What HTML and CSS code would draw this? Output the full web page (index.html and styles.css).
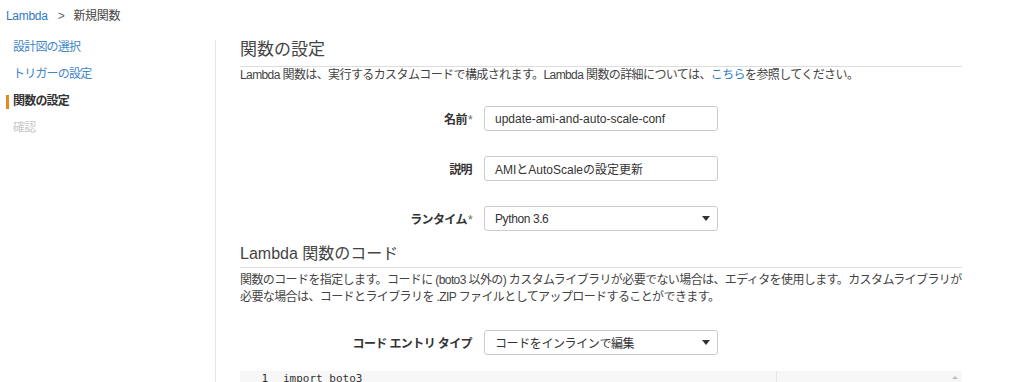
FILE: index.html
```html
<!DOCTYPE html>
<html lang="ja">
  <head>
    <meta charset="UTF-8" />
    <meta name="viewport" content="width=device-width, initial-scale=1.0" />
    <title>新規関数 - Lambda</title>
    <link rel="stylesheet" href="styles.css">
  </head>

  <body>
    <!-- Breadcrumb -->
    <div class="breadcrumb">
      <a href="#">Lambda</a>
      <span class="sep">&gt;</span>
      <span>新規関数</span>
    </div>

    <div class="layout">
      <!-- Wizard Steps -->
      <ul class="steps">
        <li><a href="#">設計図の選択</a></li>
        <li><a href="#">トリガーの設定</a></li>
        <li class="active">関数の設定</li>
        <li class="disabled">確認</li>
      </ul>

      <!-- Main Form -->
      <div class="main">
        <h2 class="section-title">関数の設定</h2>
        <p class="section-desc">
          Lambda 関数は、実行するカスタムコードで構成されます。Lambda 関数の詳細については、<a href="#">こちら</a>を参照してください。
        </p>

        <div class="form">
          <label class="form-label" for="fn-name">名前<span class="req">*</span></label>
          <input id="fn-name" class="form-control" type="text" value="update-ami-and-auto-scale-conf" />

          <label class="form-label" for="fn-desc">説明</label>
          <input id="fn-desc" class="form-control" type="text" value="AMIとAutoScaleの設定更新" />

          <label class="form-label">ランタイム<span class="req">*</span></label>
          <div class="form-control select">
            <span>Python 3.6</span>
            <span class="caret"></span>
          </div>
        </div>

        <h3 class="section-title small">Lambda 関数のコード</h3>
        <p class="section-desc code-desc">
          関数のコードを指定します。コードに (boto3 以外の) カスタムライブラリが必要でない場合は、エディタを使用します。カスタムライブラリが<br>
          必要な場合は、コードとライブラリを .ZIP ファイルとしてアップロードすることができます。
        </p>

        <div class="form entry-form">
          <label class="form-label">コード エントリ タイプ</label>
          <div class="form-control select">
            <span>コードをインラインで編集</span>
            <span class="caret"></span>
          </div>
        </div>

        <!-- Code Editor -->
        <div class="editor">
          <div class="gutter">1</div>
          <div class="code">import boto3</div>
          <div class="print-margin"></div>
          <div class="scroll-up"></div>
        </div>
      </div>
    </div>
  </body>
</html>
```

FILE: styles.css
```css
/* Global Styles */
body {
  font-family: Arial, "Liberation Sans", "Noto Sans CJK JP", sans-serif;
  font-size: 12px;
  color: #444;
  background-color: #fff;
  margin: 0;
  padding: 0;
  overflow: hidden;
}

a {
  color: #2e7bc4;
  text-decoration: none;
}

/* Breadcrumb */
.breadcrumb {
  height: 33px;
  box-sizing: border-box;
  padding: 8px 0 0 6px;
  line-height: 16px;
  color: #444;
  letter-spacing: -0.3px;
}

.breadcrumb .sep {
  margin: 0 6px 0 7px;
  color: #666;
}

/* Layout */
.layout {
  display: flex;
}

/* Wizard Steps */
.steps {
  list-style: none;
  margin: 0;
  padding: 1px 0 0 0;
  width: 215px;
  flex-shrink: 0;
  letter-spacing: -0.8px;
}

.steps li {
  line-height: 27px;
  padding-left: 13px;
  position: relative;
}

.steps li a {
  color: #3f86c8;
}

.steps li.active {
  color: #333;
  font-weight: bold;
}

.steps li.active::before {
  content: "";
  position: absolute;
  left: 6px;
  top: 7px;
  width: 3px;
  height: 14px;
  background-color: #e8871e;
}

.steps li.disabled {
  color: #c8c8c8;
}

/* Main */
.main {
  flex: 1;
  min-width: 0;
  margin-top: 7px;
  border-left: 1px solid #e6e6e6;
  padding: 0 62px 0 24px;
  height: 400px;
}

.section-title {
  margin: 0;
  font-size: 17px;
  font-weight: normal;
  line-height: 20px;
  color: #444;
  padding-bottom: 6px;
  border-bottom: 1px solid #ddd;
}

.section-title.small {
  font-size: 16px;
  margin-top: 13px;
  padding-bottom: 3px;
}

.section-desc {
  margin: 0;
  line-height: 17px;
  color: #444;
  letter-spacing: -0.6px;
}

.code-desc {
  margin-top: 4px;
  white-space: nowrap;
}

/* Form */
.form {
  display: grid;
  grid-template-columns: 232px 234px;
  column-gap: 12px;
  row-gap: 25px;
  align-items: center;
  margin-top: 22px;
}

.entry-form {
  margin-top: 24px;
}

.form-label {
  text-align: right;
  font-weight: bold;
  color: #333;
  letter-spacing: -0.6px;
}

.form-label .req {
  font-weight: normal;
  color: #666;
  margin-left: 1px;
}

.form-control {
  box-sizing: border-box;
  height: 25px;
  width: 234px;
  padding: 0 10px;
  border: 1px solid #ccc;
  border-radius: 3px;
  font-family: inherit;
  font-size: 12px;
  color: #333;
  outline: none;
}

.select {
  display: flex;
  align-items: center;
  justify-content: space-between;
}

.select span:first-child {
  letter-spacing: -0.4px;
}

.caret {
  width: 0;
  height: 0;
  margin-right: -3px;
  border-left: 4px solid transparent;
  border-right: 4px solid transparent;
  border-top: 5px solid #333;
}

/* Code Editor */
.editor {
  position: relative;
  display: flex;
  margin-top: 16px;
  height: 40px;
  background-color: #f7f7f7;
  font-family: "DejaVu Sans Mono", "Liberation Mono", monospace;
  font-size: 11px;
  line-height: 14px;
  color: #333;
}

.gutter {
  width: 28px;
  text-align: right;
  padding-top: 1px;
}

.code {
  padding: 1px 0 0 15px;
}

.print-margin {
  position: absolute;
  left: 536px;
  top: 0;
  bottom: 0;
  width: 1px;
  background-color: #e6e6e6;
}

.scroll-up {
  position: absolute;
  right: 4px;
  top: 5px;
  width: 0;
  height: 0;
  border-left: 3px solid transparent;
  border-right: 3px solid transparent;
  border-bottom: 3px solid #bbb;
}
```
